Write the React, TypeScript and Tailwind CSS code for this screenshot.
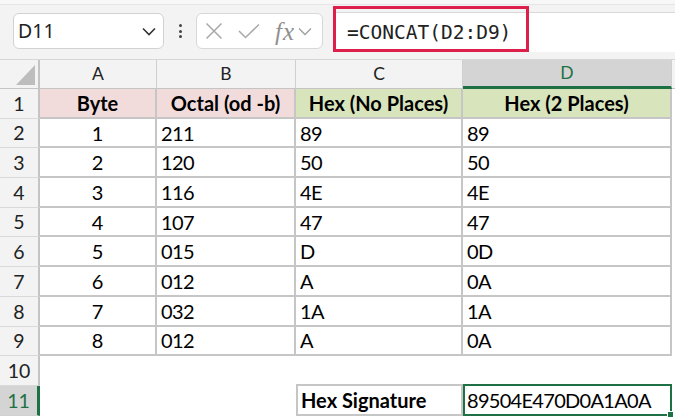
import React from "react";

const rows: [string, string, string, string][] = [
  ["1", "211", "89", "89"],
  ["2", "120", "50", "50"],
  ["3", "116", "4E", "4E"],
  ["4", "107", "47", "47"],
  ["5", "015", "D", "0D"],
  ["6", "012", "A", "0A"],
  ["7", "032", "1A", "1A"],
  ["8", "012", "A", "0A"],
];

const cellFont = { fontFamily: "Lato, 'Noto Sans', sans-serif" };

function RowHead({ n, selected }: { n: number; selected?: boolean }) {
  return (
    <div
      className={
        selected
          ? "flex items-center justify-center bg-[#d4d4d4] text-[#1e7145] border-r-[3px] border-r-[#1e7145] border-b border-b-[#d0d0d0] text-[19.5px]"
          : "flex items-center justify-center bg-[#f3f3f3] text-[#222] border-r-2 border-r-[#c4c4c4] border-b border-b-[#d9d9d9] text-[19.5px]"
      }
    >
      {n}
    </div>
  );
}

export default function App() {
  return (
    <div className="w-[675px] h-[418px] overflow-hidden bg-white relative" style={cellFont}>
      {/* toolbar */}
      <div className="h-[60px] bg-[#f3f3f3] relative border-b border-b-[#d6d6d6]">
        <div className="absolute left-0 right-0 top-0 h-[5px] bg-[#f7f7f7] border-b border-b-[#e6e6e6]" />
        <div className="flex items-start pt-[13px] pl-[13px]">
          {/* name box */}
          <div className="w-[151px] h-[36px] bg-white border border-[#d2d2d2] rounded-[6px] flex items-center justify-between pl-[4px] pr-[7px]">
            <span className="text-[19.5px] text-[#222]" style={{ fontFamily: "'Noto Sans', sans-serif" }}>
              D11
            </span>
            <svg width="14" height="9" viewBox="0 0 14 9">
              <path d="M1 1.5 L7 7.5 L13 1.5" fill="none" stroke="#333" strokeWidth="1.6" />
            </svg>
          </div>
          {/* dots */}
          <div className="w-[32px] h-[36px] flex flex-col items-center justify-center gap-[2.5px]">
            <div className="w-[3px] h-[3px] rounded-full bg-[#444]" />
            <div className="w-[3px] h-[3px] rounded-full bg-[#444]" />
            <div className="w-[3px] h-[3px] rounded-full bg-[#444]" />
          </div>
          {/* formula buttons */}
          <div className="w-[127px] h-[36px] bg-white border border-[#d8d8d8] rounded-[6px] flex items-center pl-[8px]">
            <svg width="18" height="18" viewBox="0 0 18 18">
              <path d="M1.5 1.5 L16.5 16.5 M16.5 1.5 L1.5 16.5" stroke="#a8a8a8" strokeWidth="1.5" fill="none" />
            </svg>
            <svg width="22" height="16" viewBox="0 0 22 16" className="ml-[15px]">
              <path d="M1 8 L7.5 14.5 L21 1.5" stroke="#a8a8a8" strokeWidth="1.5" fill="none" />
            </svg>
            <span
              className="ml-[15px] text-[25px] italic text-[#8f8f8f] leading-none tracking-[1px]"
              style={{ fontFamily: "'Liberation Serif', 'DejaVu Serif', serif" }}
            >
              fx
            </span>
            <svg width="14" height="9" viewBox="0 0 14 9" className="ml-[3px]">
              <path d="M1 1.5 L7 7.5 L13 1.5" fill="none" stroke="#a0a0a0" strokeWidth="1.4" />
            </svg>
          </div>
          {/* formula input */}
          <div className="ml-[10px] -mt-[1px] flex-1 h-[40px] bg-white border-t border-t-[#d8d8d8] border-l border-l-[#d8d8d8] flex items-center pl-[13px]">
            <span className="text-[19.5px] text-[#222]" style={{ fontFamily: "'DejaVu Sans Mono', monospace" }}>
              =CONCAT(D2:D9)
            </span>
          </div>
        </div>
        <div className="absolute left-[333px] top-[6px] w-[196px] h-[46px] border-[3px] border-[#dc1f4b]" />
      </div>

      {/* sheet */}
      <div
        className="grid"
        style={{
          gridTemplateColumns: "40px 117px 139px 167px 209px 1fr",
          gridTemplateRows: "29px repeat(11, 29.7px)",
        }}
      >
        {/* header row */}
        <div className="relative bg-[#f3f3f3] border-r-2 border-r-[#c4c4c4] border-b border-b-[#c4c4c4]">
          <svg width="40" height="29" className="absolute left-0 top-0">
            <polygon points="35,5 16,25 35,25" fill="#bdbdbd" />
          </svg>
        </div>
        {["A", "B", "C"].map((c) => (
          <div
            key={c}
            className="flex items-center justify-center bg-[#f3f3f3] border-r border-r-[#cfcfcf] border-b border-b-[#c4c4c4] text-[17.5px] text-[#222]"
          >
            {c}
          </div>
        ))}
        <div className="flex items-center justify-center bg-[#d4d4d4] border-r border-r-[#cfcfcf] border-b-[3px] border-b-[#1e7145] text-[17.5px] text-[#1e7145]">
          D
        </div>
        <div className="bg-[#f3f3f3] border-b border-b-[#c4c4c4]" />

        {/* row 1 */}
        <RowHead n={1} />
        <div className="flex items-center justify-center bg-[#f2dcdb] border-r-2 border-b-2 border-[#c6c6c6] font-bold text-[20px] text-black">
          Byte
        </div>
        <div className="flex items-center justify-center bg-[#f2dcdb] border-r-2 border-b-2 border-[#c6c6c6] font-bold text-[20px] text-black">
          Octal (od -b)
        </div>
        <div className="flex items-center justify-center bg-[#d8e4bc] border-r-2 border-b-2 border-[#c6c6c6] font-bold text-[20px] text-black">
          Hex (No Places)
        </div>
        <div className="flex items-center justify-center bg-[#d8e4bc] border-r-2 border-b-2 border-[#c6c6c6] font-bold text-[20px] text-black">
          Hex (2 Places)
        </div>
        <div />

        {rows.map((r, i) => (
          <React.Fragment key={i}>
            <RowHead n={i + 2} />
            <div className="flex items-center justify-center border-r-2 border-b-2 border-[#c6c6c6] text-[20px] text-black">
              {r[0]}
            </div>
            <div className="flex items-center pl-[4px] border-r-2 border-b-2 border-[#c6c6c6] text-[20px] text-black tracking-[-0.6px]">
              {r[1]}
            </div>
            <div className="flex items-center pl-[4px] border-r-2 border-b-2 border-[#c6c6c6] text-[20px] text-black tracking-[-0.6px]">
              {r[2]}
            </div>
            <div className="flex items-center pl-[4px] border-r-2 border-b-2 border-[#c6c6c6] text-[20px] text-black tracking-[-0.6px]">
              {r[3]}
            </div>
            <div />
          </React.Fragment>
        ))}

        {/* row 10 */}
        <RowHead n={10} />
        <div />
        <div />
        <div className="border-b-2 border-b-[#c6c6c6]" />
        <div />
        <div />

        {/* row 11 */}
        <RowHead n={11} selected />
        <div />
        <div />
        <div className="flex items-center pl-[3px] border-l-2 border-r-2 border-b-2 border-[#c6c6c6] font-bold text-[20px] text-black">
          Hex Signature
        </div>
        <div className="relative flex items-center pl-[2px] border-2 -mt-[2px] border-[#1e7145] text-[20px] text-black tracking-[-0.7px]">
          89504E470D0A1A0A
          <div className="absolute -right-[4px] -bottom-[4px] w-[7px] h-[7px] bg-[#1e7145] border border-white" />
        </div>
        <div />
      </div>
    </div>
  );
}
